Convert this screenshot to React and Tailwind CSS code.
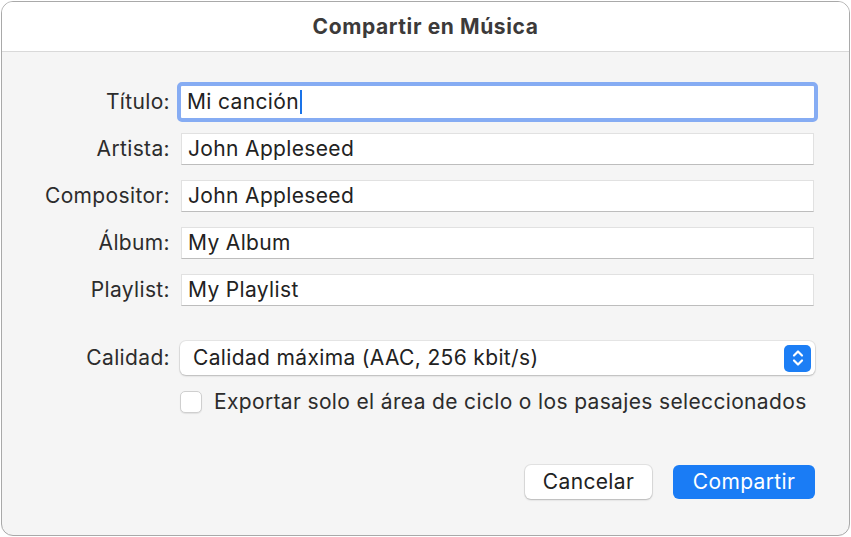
import React from "react";

const fields = [
  { label: "Título:", value: "Mi canción", focused: true },
  { label: "Artista:", value: "John Appleseed" },
  { label: "Compositor:", value: "John Appleseed" },
  { label: "Álbum:", value: "My Album" },
  { label: "Playlist:", value: "My Playlist" },
];

const FieldRow = ({ label, value, focused }) => (
  <div className="flex items-center h-[32px]">
    <div className="w-[170px] pr-[2px] text-right">{label}</div>
    <div className="ml-[9px] flex-1 mr-[35px] relative">
      {focused && (
        <div className="absolute -inset-[4px] rounded-[5px] border-[4px] border-[#86acf3]" />
      )}
      <div
        className={
          "h-[32px] bg-white flex items-center px-[6px] text-[#222] " +
          (focused ? "" : "border border-[#e1e1e1] border-b-[#bdbdbd]")
        }
      >
        <span>{value}</span>
        {focused && <span className="ml-[1px] w-[2px] h-[24px] bg-[#1a73e8]" />}
      </div>
    </div>
  </div>
);

const Stepper = () => (
  <div className="w-[27px] h-[27px] rounded-[5px] bg-[#1c7ef5] flex items-center justify-center">
    <svg width="14" height="20" viewBox="0 0 14 20" fill="none">
      <path d="M3 7.5 L7 3.5 L11 7.5" stroke="white" strokeWidth="2.2" strokeLinecap="round" strokeLinejoin="round" />
      <path d="M3 12.5 L7 16.5 L11 12.5" stroke="white" strokeWidth="2.2" strokeLinecap="round" strokeLinejoin="round" />
    </svg>
  </div>
);

const App = () => {
  return (
    <div
      className="w-[851px] h-[537px] bg-white p-[1px] text-[21px] tracking-[0.35px] text-[#2c2c2c]"
      style={{ fontFamily: "Inter, 'Noto Sans', sans-serif" }}
    >
      <div className="w-full h-full rounded-[12px] border border-[#a9a9a9] overflow-hidden flex flex-col bg-[#f5f5f5]">
        <div className="h-[50px] bg-white border-b border-[#d9d9d9] flex items-center justify-center">
          <span className="text-[21px] font-bold text-[#3c3a3a] tracking-[0.6px]">Compartir en Música</span>
        </div>
        <div className="flex-1 flex flex-col pt-[34px]">
          <div className="flex flex-col gap-[15px]">
            {fields.map((f) => (
              <FieldRow key={f.label} {...f} />
            ))}
          </div>
          <div className="flex items-center mt-[35px]">
            <div className="w-[170px] pr-[2px] text-right">Calidad:</div>
            <div className="ml-[8px] mr-[34px] flex-1 h-[34px] bg-white rounded-[6px] shadow-[0_0_0_1px_rgba(0,0,0,0.06),0_1px_2px_rgba(0,0,0,0.2)] flex items-center justify-between pl-[13px] pr-[4px]">
              <span className="text-[#222]">Calidad máxima (AAC, 256 kbit/s)</span>
              <Stepper />
            </div>
          </div>
          <div className="flex items-center mt-[11px] ml-[178px]">
            <div className="w-[22px] h-[22px] rounded-[5px] bg-white border border-[#cfcfcf] shadow-[0_1px_1px_rgba(0,0,0,0.08)]" />
            <span className="ml-[12px]">Exportar solo el área de ciclo o los pasajes seleccionados</span>
          </div>
          <div className="flex justify-end gap-[21px] mt-[47px] mr-[34px]">
            <button className="w-[127px] h-[34px] bg-white rounded-[6px] shadow-[0_0_0_1px_rgba(0,0,0,0.07),0_1px_2px_rgba(0,0,0,0.2)] text-[#222]">
              Cancelar
            </button>
            <button className="w-[142px] h-[34px] rounded-[6px] bg-[#1a7cf5] text-white">
              Compartir
            </button>
          </div>
        </div>
      </div>
    </div>
  );
};

export default App;
